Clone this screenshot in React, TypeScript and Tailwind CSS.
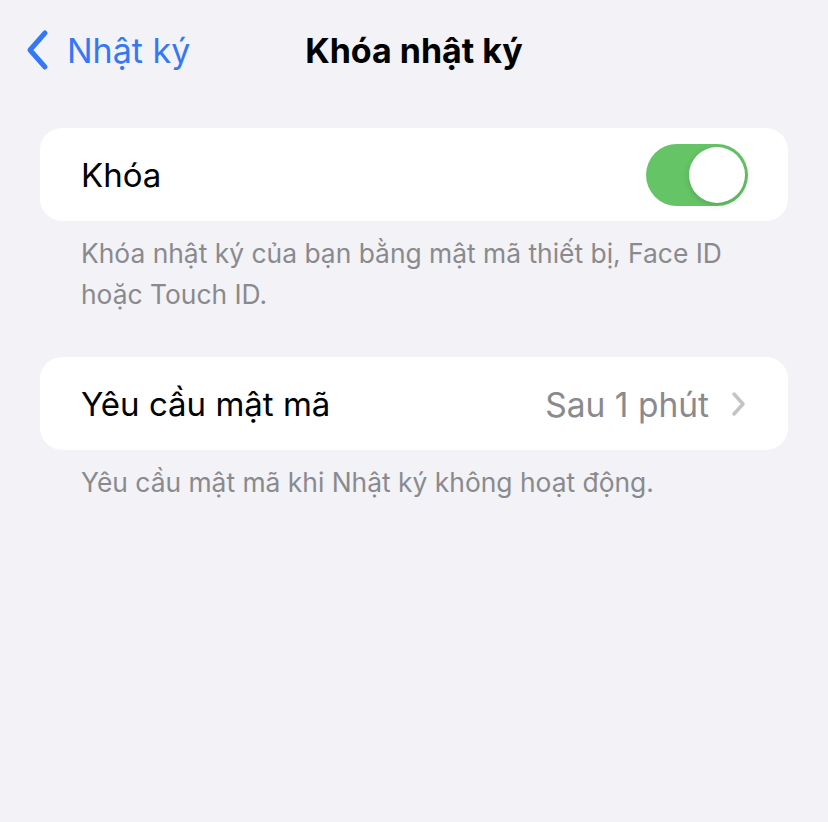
import { useState } from "react";

function Toggle({ on, onChange }: { on: boolean; onChange: (v: boolean) => void }) {
  return (
    <button
      onClick={() => onChange(!on)}
      className={`relative h-[62px] w-[102px] shrink-0 rounded-full transition-colors ${
        on ? "bg-[#65c466]" : "bg-[#e9e9eb]"
      }`}
    >
      <span
        className={`absolute top-[3px] h-[56px] w-[56px] rounded-full bg-white shadow-[0_2px_6px_rgba(0,0,0,0.15)] transition-all ${
          on ? "left-[43px]" : "left-[3px]"
        }`}
      />
    </button>
  );
}

export default function App() {
  const [locked, setLocked] = useState(true);

  return (
    <main
      className="min-h-[822px] w-full bg-[#f2f2f7] text-black"
      style={{ fontFamily: "Inter, 'Noto Sans', sans-serif" }}
    >
      {/* Navigation bar */}
      <header className="relative flex h-[100px] items-center px-[24px]">
        <button className="flex items-center gap-[17px] text-[#3478f6]">
          <svg width="26" height="42" viewBox="0 0 26 42" fill="none">
            <path
              d="M21 4 L6 21 L21 38"
              stroke="currentColor"
              strokeWidth="5"
              strokeLinecap="round"
              strokeLinejoin="round"
            />
          </svg>
          <span className="text-[34px]">Nhật ký</span>
        </button>
        <h1 className="absolute left-1/2 -translate-x-1/2 text-[34px] font-bold">
          Khóa nhật ký
        </h1>
      </header>

      <div className="px-[40px] pt-[28px]">
        {/* Lock section */}
        <section>
          <div className="flex h-[93px] items-center justify-between rounded-[22px] bg-white pl-[41px] pr-[40px]">
            <span className="pt-[3px] text-[33px]">Khóa</span>
            <Toggle on={locked} onChange={setLocked} />
          </div>
          <p className="px-[41px] pt-[12px] text-[26.4px] leading-[41px] text-[#8a8a8e]">
            Khóa nhật ký của bạn bằng mật mã thiết bị, Face ID hoặc Touch ID.
          </p>
        </section>

        {/* Passcode section */}
        <section className="mt-[42px]">
          <div className="flex h-[93px] items-center justify-between rounded-[22px] bg-white pl-[41px] pr-[42px]">
            <span className="pt-[3px] text-[33px]">Yêu cầu mật mã</span>
            <div className="flex items-center gap-[22px] text-[#8a8a8e]">
              <span className="pt-[3px] text-[33.5px]">Sau 1 phút</span>
              <svg width="15" height="26" viewBox="0 0 15 26" fill="none">
                <path
                  d="M3 3 L12 13 L3 23"
                  stroke="#c4c4c7"
                  strokeWidth="3.5"
                  strokeLinecap="round"
                  strokeLinejoin="round"
                />
              </svg>
            </div>
          </div>
          <p className="px-[41px] pt-[12px] text-[26.4px] leading-[41px] text-[#8a8a8e]">
            Yêu cầu mật mã khi Nhật ký không hoạt động.
          </p>
        </section>
      </div>
    </main>
  );
}
